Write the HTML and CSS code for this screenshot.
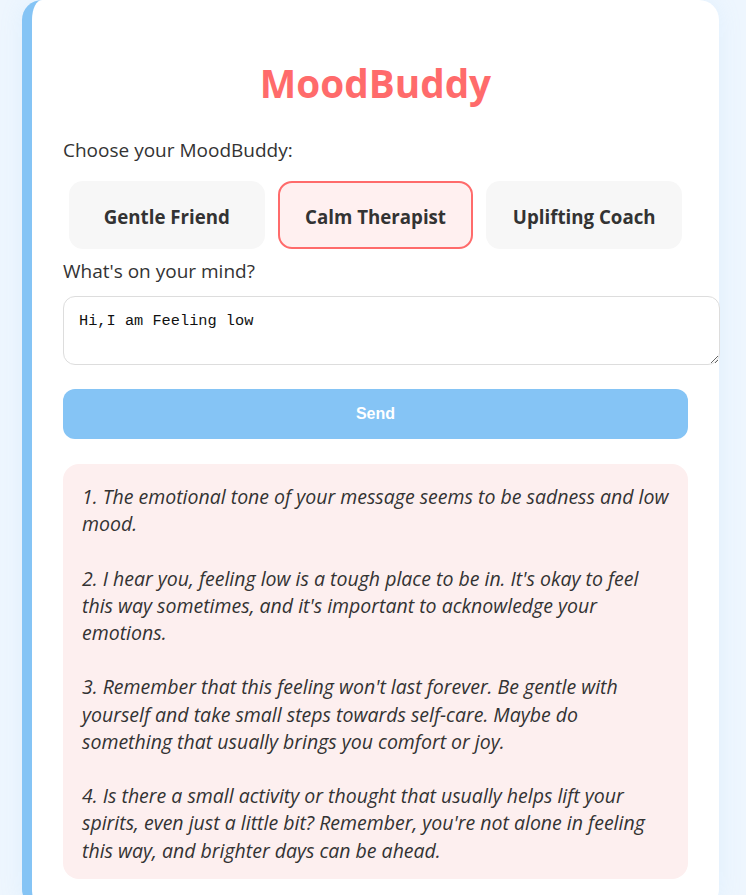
FILE: index.html
```html
<!DOCTYPE html>
<html lang="en">
<head>
<meta charset="utf-8">
<title>MoodBuddy</title>
<link rel="stylesheet" href="styles.css">
</head>
<body>
<main class="card">
  <h1 class="title">MoodBuddy</h1>
  <label class="label">Choose your MoodBuddy:</label>
  <div class="personas">
    <button class="persona">Gentle Friend</button>
    <button class="persona selected">Calm Therapist</button>
    <button class="persona">Uplifting Coach</button>
  </div>
  <label class="label label-mind" for="msg">What's on your mind?</label>
  <textarea id="msg" class="message" spellcheck="false">Hi,I am Feeling low</textarea>
  <button class="send">Send</button>
  <div class="response">1. The emotional tone of your message seems to be sadness and low mood.

2. I hear you, feeling low is a tough place to be in. It's okay to feel this way sometimes, and it's important to acknowledge your emotions.

3. Remember that this feeling won't last forever. Be gentle with yourself and take small steps towards self-care. Maybe do something that usually brings you comfort or joy.

4. Is there a small activity or thought that usually helps lift your spirits, even just a little bit? Remember, you're not alone in feeling this way, and brighter days can be ahead.</div>
</main>
</body>
</html>
```
FILE: styles.css
```css
html, body {
  margin: 0;
  padding: 0;
}

body {
  background: #eef6fe;
  font-family: "Open Sans", "Noto Sans", sans-serif;
  color: #333333;
  height: 895px;
  overflow: hidden;
}

.card {
  box-sizing: border-box;
  width: 697px;
  margin-left: 22px;
  background: #ffffff;
  border-left: 10px solid #85c4f5;
  border-radius: 20px;
  padding: 30px 31px 30px 31px;
  display: flex;
  flex-direction: column;
  box-shadow: 0 0 24px rgba(133, 196, 245, 0.12);
}

.title {
  margin: 27px 0 0 0;
  text-align: center;
  color: #ff6b6b;
  font-family: "Open Sans", sans-serif;
  font-weight: 700;
  font-size: 38.7px;
  line-height: 52px;
}

.label {
  display: block;
  font-size: 19px;
  line-height: 26px;
  margin-top: 28px;
}

.label-mind {
  margin-top: 9px;
}

.personas {
  display: flex;
  gap: 13px;
  padding: 0 6px;
  margin-top: 18px;
}

.persona {
  flex: 1;
  height: 68px;
  border: 2px solid transparent;
  border-radius: 14px;
  background: #f7f7f7;
  font-family: "Open Sans", sans-serif;
  font-weight: 700;
  font-size: 18.7px;
  color: #333333;
  padding: 3px 0 0 0;
  line-height: 26px;
}

.persona.selected {
  border-color: #ff6b6b;
  background: #fff0f0;
}

.message {
  display: block;
  width: 100%;
  height: 37px;
  margin-top: 12px;
  padding: 15px;
  border: 1px solid #dddddd;
  border-radius: 12px;
  font-family: "Liberation Mono", monospace;
  font-size: 15.3px;
  line-height: 19px;
  color: #111111;
  background: #ffffff;
  resize: vertical;
}

.send {
  display: block;
  width: 100%;
  height: 50px;
  margin-top: 24px;
  border: none;
  border-radius: 12px;
  background: #85c4f5;
  color: #ffffff;
  font-family: "Liberation Sans", Arial, sans-serif;
  font-weight: 700;
  font-size: 16px;
}

.response {
  margin-top: 25px;
  padding: 19px 17px 15px 19px;
  background: #fdefef;
  border-radius: 16px;
  font-style: italic;
  font-size: 19.5px;
  line-height: 27.2px;
  white-space: pre-wrap;
  color: #333333;
}
```
